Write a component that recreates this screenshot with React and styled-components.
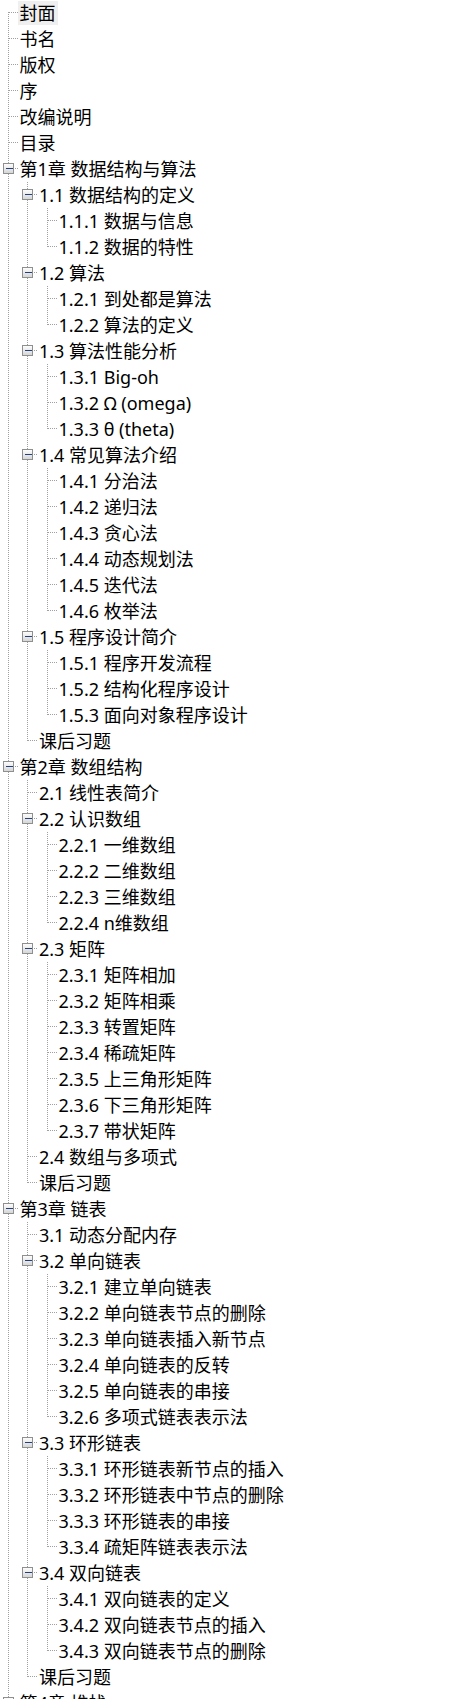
import styled, { createGlobalStyle } from "styled-components";

const GlobalStyle = createGlobalStyle`
  html, body {
    margin: 0;
    padding: 0;
    background: #fff;
  }
  body {
    font-family: "Noto Sans", "Noto Sans CJK SC", sans-serif;
    color: #000;
  }
`;

const ROW = 26;
const INDENT = 19.5;

const toc = [
  { t: "封面" },
  { t: "书名" },
  { t: "版权" },
  { t: "序" },
  { t: "改编说明" },
  { t: "目录" },
  {
    t: "第1章 数据结构与算法",
    c: [
      { t: "1.1 数据结构的定义", c: [{ t: "1.1.1 数据与信息" }, { t: "1.1.2 数据的特性" }] },
      { t: "1.2 算法", c: [{ t: "1.2.1 到处都是算法" }, { t: "1.2.2 算法的定义" }] },
      {
        t: "1.3 算法性能分析",
        c: [{ t: "1.3.1 Big-oh" }, { t: "1.3.2 Ω (omega)" }, { t: "1.3.3 θ (theta)" }],
      },
      {
        t: "1.4 常见算法介绍",
        c: [
          { t: "1.4.1 分治法" },
          { t: "1.4.2 递归法" },
          { t: "1.4.3 贪心法" },
          { t: "1.4.4 动态规划法" },
          { t: "1.4.5 迭代法" },
          { t: "1.4.6 枚举法" },
        ],
      },
      {
        t: "1.5 程序设计简介",
        c: [
          { t: "1.5.1 程序开发流程" },
          { t: "1.5.2 结构化程序设计" },
          { t: "1.5.3 面向对象程序设计" },
        ],
      },
      { t: "课后习题" },
    ],
  },
  {
    t: "第2章 数组结构",
    c: [
      { t: "2.1 线性表简介" },
      {
        t: "2.2 认识数组",
        c: [
          { t: "2.2.1 一维数组" },
          { t: "2.2.2 二维数组" },
          { t: "2.2.3 三维数组" },
          { t: "2.2.4 n维数组" },
        ],
      },
      {
        t: "2.3 矩阵",
        c: [
          { t: "2.3.1 矩阵相加" },
          { t: "2.3.2 矩阵相乘" },
          { t: "2.3.3 转置矩阵" },
          { t: "2.3.4 稀疏矩阵" },
          { t: "2.3.5 上三角形矩阵" },
          { t: "2.3.6 下三角形矩阵" },
          { t: "2.3.7 带状矩阵" },
        ],
      },
      { t: "2.4 数组与多项式" },
      { t: "课后习题" },
    ],
  },
  {
    t: "第3章 链表",
    c: [
      { t: "3.1 动态分配内存" },
      {
        t: "3.2 单向链表",
        c: [
          { t: "3.2.1 建立单向链表" },
          { t: "3.2.2 单向链表节点的删除" },
          { t: "3.2.3 单向链表插入新节点" },
          { t: "3.2.4 单向链表的反转" },
          { t: "3.2.5 单向链表的串接" },
          { t: "3.2.6 多项式链表表示法" },
        ],
      },
      {
        t: "3.3 环形链表",
        c: [
          { t: "3.3.1 环形链表新节点的插入" },
          { t: "3.3.2 环形链表中节点的删除" },
          { t: "3.3.3 环形链表的串接" },
          { t: "3.3.4 疏矩阵链表表示法" },
        ],
      },
      {
        t: "3.4 双向链表",
        c: [
          { t: "3.4.1 双向链表的定义" },
          { t: "3.4.2 双向链表节点的插入" },
          { t: "3.4.3 双向链表节点的删除" },
        ],
      },
      { t: "课后习题" },
    ],
  },
  // the list goes on below the fold, so the root line keeps running
  { t: "第4章 堆栈", c: [], open: true },
];

function flatten(nodes, level, guides, out) {
  nodes.forEach((n, i) => {
    const last = i === nodes.length - 1 && !n.open;
    out.push({
      text: n.t,
      level,
      guides,
      last,
      first: level === 0 && i === 0,
      parent: !!n.c,
    });
    if (n.c) flatten(n.c, level + 1, [...guides, !last], out);
  });
  return out;
}

const rows = flatten(toc, 0, [], []);

const lineX = (l) => Math.round(7.5 + INDENT * l) + 0.5;

function Connectors({ row }) {
  const w = INDENT * (row.level + 1) - 2;
  const x = lineX(row.level);
  return (
    <Guides width={w} height={ROW}>
      <defs>
        <linearGradient id="boxFill" x1="0" y1="0" x2="0" y2="1">
          <stop offset="0" stopColor="#ffffff" />
          <stop offset="1" stopColor="#d4d4d4" />
        </linearGradient>
      </defs>
      <g stroke="#a0a0a0" strokeDasharray="1 1" shapeRendering="crispEdges">
        {row.guides.map((g, l) =>
          g ? <line key={l} x1={lineX(l)} y1={0} x2={lineX(l)} y2={ROW} /> : null
        )}
        <line x1={x} y1={row.first ? 12 : 0} x2={x} y2={row.last ? 13 : ROW} />
        <line x1={x} y1={12.5} x2={w} y2={12.5} />
      </g>
      {row.parent && (
        <g shapeRendering="crispEdges">
          <rect x={x - 5} y={7.5} width={10} height={10} fill="url(#boxFill)" stroke="#8e8f8f" />
          <line x1={x - 3} y1={12.5} x2={x + 4} y2={12.5} stroke="#23407a" />
        </g>
      )}
    </Guides>
  );
}

export default function App() {
  return (
    <>
      <GlobalStyle />
      <Tree>
        {rows.map((row, i) => (
          <Row key={i}>
            <Connectors row={row} />
            <Label selected={i === 0}>{row.text}</Label>
          </Row>
        ))}
      </Tree>
    </>
  );
}

const Tree = styled.div`
  width: 470px;
  overflow: hidden;
`;

const Row = styled.div`
  display: flex;
  align-items: center;
  height: ${ROW}px;
`;

const Guides = styled.svg`
  display: block;
  flex: none;
`;

const Label = styled.span`
  display: block;
  height: 24px;
  padding: 0 2px;
  font-size: 18px;
  line-height: 24px;
  white-space: nowrap;
  background: ${(p) => (p.selected ? "#efefef" : "transparent")};
`;
